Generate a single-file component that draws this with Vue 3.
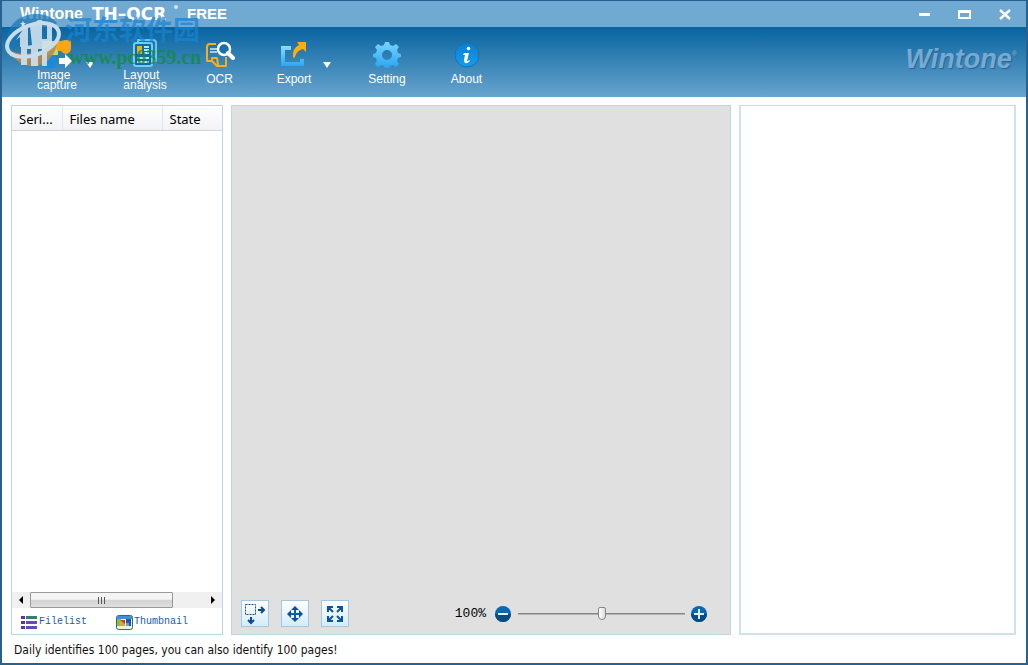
<script setup>
import { ref } from 'vue'

const zoom = ref(50)
const columns = ['Seri...', 'Files name', 'State']
</script>

<template>
  <div class="window">
    <header class="titlebar">
      <h1 class="title">
        <span class="brand">Wintone</span>
        <span class="product">TH–OCR</span>
        <span class="edition">FREE</span>
      </h1>
      <div class="controls">
        <button type="button" aria-label="Minimize">
          <svg width="16" height="14" viewBox="0 0 16 14"><path d="M2 7.5h11" stroke="#fff" stroke-width="3" /></svg>
        </button>
        <button type="button" aria-label="Maximize">
          <svg width="16" height="14" viewBox="0 0 16 14"><path d="M1 3h13v9H1zM3 6v4h9V6z" fill="#fff" fill-rule="evenodd" /></svg>
        </button>
        <button type="button" aria-label="Close">
          <svg width="16" height="14" viewBox="0 0 16 14"><path d="M3 3l10 9M13 3L3 12" stroke="#fff" stroke-width="2.4" /></svg>
        </button>
      </div>
    </header>

    <nav class="toolbar">
      <div class="split">
        <button type="button" class="tool stacked">
          <svg width="40" height="32" viewBox="0 0 40 32">
            <rect x="5" y="3" width="16" height="14" fill="#c9d573" />
            <path d="M5 17h14v9q0 4-4 4H5z" fill="#178bdc" />
            <path d="M18 7q1-5 6-4l4-1h4q2 0 2 3v5q0 5-5 6-3 0-5-3-5 1-6-6z" fill="#f9a616" />
            <path d="M22 20h6v-4l7 7-7 7v-4h-6z" fill="#fff" />
          </svg>
          <span>Image<br>capture</span>
        </button>
        <button type="button" class="drop" aria-label="Image capture options">
          <svg width="10" height="6" viewBox="0 0 10 6"><path d="M1 0h8L5 6z" fill="#fff" /></svg>
        </button>
      </div>
      <button type="button" class="tool stacked">
        <svg width="30" height="32" viewBox="0 0 30 32">
          <path d="M8 4V2h15q3 0 3 3v18h-3" fill="none" stroke="#65c6f2" stroke-width="2" />
          <rect x="4" y="5" width="18" height="23" rx="2" fill="#0d6da8" stroke="#73cef4" stroke-width="2" />
          <rect x="7" y="8" width="5" height="8" fill="#e1b329" />
          <path d="M14 8h5v2h-5zM14 11h5v2h-5zM14 14h5v2h-5zM7 19h12v2H7zM7 23h12v2H7z" fill="#b9e3f5" />
        </svg>
        <span>Layout<br>analysis</span>
      </button>
      <button type="button" class="tool narrow">
        <svg width="30" height="28" viewBox="0 0 30 28">
          <path d="M11 3H5Q2 3 2 6v14h5l5 5h9v-9M7 20v-3h5l1 7" fill="none" stroke="#f9ad19" stroke-width="2" stroke-linejoin="round" />
          <path d="M5 8h7M5 11h7" stroke="#d9e9f4" stroke-width="1.5" />
          <circle cx="19" cy="8" r="6" fill="#1c70a9" stroke="#fff" stroke-width="2.5" />
          <path d="M23 12l5 5" stroke="#fff" stroke-width="4" stroke-linecap="round" />
        </svg>
        <span>OCR</span>
      </button>
      <div class="split">
        <button type="button" class="tool">
          <svg width="28" height="28" viewBox="0 0 28 28">
            <defs><linearGradient id="exportBlue" x1="0" y1="0" x2="0" y2="1"><stop stop-color="#8bdcff" /><stop offset="1" stop-color="#27a8ef" /></linearGradient></defs>
            <path d="M11 5H1v20h23v-7h-4v3H5V9h6z" fill="url(#exportBlue)" />
            <path d="M17 1h9v10l-3-3q-6 1-8 8l-2 1q-1-10 6-13z" fill="#ffad0b" />
          </svg>
          <span>Export</span>
        </button>
        <button type="button" class="drop" aria-label="Export options">
          <svg width="10" height="6" viewBox="0 0 10 6"><path d="M1 0h8L5 6z" fill="#fff" /></svg>
        </button>
      </div>
      <button type="button" class="tool wide">
        <svg width="28" height="28" viewBox="0 0 28 28">
          <defs><linearGradient id="gearBlue" x1="0" y1="0" x2="0" y2="1"><stop stop-color="#77d3ff" /><stop offset="1" stop-color="#2aa5f2" /></linearGradient></defs>
          <path fill="url(#gearBlue)" fill-rule="evenodd" d="M12 1h4l1 3 3 1 3-2 3 3-2 3 1 3 3 1v3l-3 1-1 3 2 3-3 3-3-2-3 1-1 2h-4l-1-2-3-1-3 2-3-3 2-3-1-3-3-1v-3l3-1 1-3-2-3 3-3 3 2 3-1zM14 9a5 5 0 1 0 0 10a5 5 0 1 0 0-10" />
        </svg>
        <span>Setting</span>
      </button>
      <button type="button" class="tool narrow">
        <svg width="28" height="28" viewBox="0 0 28 28">
          <defs><linearGradient id="infoBlue" x1="0" y1="0" x2="0" y2="1"><stop stop-color="#087fd4" /><stop offset="1" stop-color="#159cee" /></linearGradient></defs>
          <circle cx="14" cy="14" r="12" fill="url(#infoBlue)" stroke="#1672ae" />
          <circle cx="15.500" cy="7.500" r="1.800" fill="#fff" />
          <path d="M11 12h5l-2 8q0 1 2-1l1 1q-3 3-5 2-1-1-1-3l1-5h-2z" fill="#fff" />
        </svg>
        <span>About</span>
      </button>
      <div class="logo">Wintone<sup>®</sup></div>
    </nav>

    <main class="workspace">
      <section class="files">
        <table>
          <thead>
            <tr><th v-for="column in columns" :key="column" scope="col">{{ column }}</th></tr>
          </thead>
        </table>
        <div class="scrollbar">
          <button type="button" aria-label="Scroll left"><svg width="4" height="8" viewBox="0 0 4 8"><path d="M4 0v8L0 4z" /></svg></button>
          <div class="rail"><div class="grip"><i></i><i></i><i></i></div></div>
          <button type="button" aria-label="Scroll right"><svg width="4" height="8" viewBox="0 0 4 8"><path d="M0 0v8l4-4z" /></svg></button>
        </div>
        <div class="tabs">
          <button type="button">
            <svg width="17" height="14" viewBox="0 0 17 14">
              <path d="M0 1h4v3H0zM0 6h4v3H0zM0 11h4v3H0z" fill="#5338ad" />
              <path d="M5 1h11v3H5z" fill="#317f70" /><path d="M5 6h11v3H5zM5 11h11v3H5z" fill="#6549bd" />
            </svg>
            <span>Filelist</span>
          </button>
          <button type="button">
            <svg width="17" height="15" viewBox="0 0 17 15">
              <rect x=".5" y=".5" width="16" height="14" rx="2" fill="#e8f4db" stroke="#456b38" />
              <path d="M1 1h15v3H1z" fill="#3d91d9" /><path d="M1 4h4v7H1z" fill="#79c843" />
              <path d="M4 5h5v6H4z" fill="#c83b31" /><path d="M4 5l5 4v2H4z" fill="#e8a326" />
              <path d="M10 4h5v7h-5z" fill="#2453ad" /><path d="M10 8h3v3h-3z" fill="#54a9d8" />
            </svg>
            <span>Thumbnail</span>
          </button>
        </div>
      </section>

      <section class="preview">
        <div class="viewbar">
          <button type="button" class="view" aria-label="Actual size">
            <svg width="22" height="22" viewBox="0 0 22 22">
              <rect x="1.500" y="1.500" width="10" height="10" fill="none" stroke="#234a78" stroke-dasharray="2 1" />
              <path d="M14 7h6M17 4l3 3-3 3M7 14v6M4 17l3 3 3-3" fill="none" stroke="#0e4c91" stroke-width="2" />
            </svg>
          </button>
          <button type="button" class="view" aria-label="Move">
            <svg width="22" height="22" viewBox="0 0 22 22">
              <path d="M11 4v14M4 11h14" stroke="#0c5eb5" stroke-width="2" />
              <path d="M11 3l4 4H7zM11 19l4-4H7zM3 11l4-4v8zM19 11l-4-4v8z" fill="#0b4fa0" />
            </svg>
          </button>
          <button type="button" class="view" aria-label="Fit to window">
            <svg width="22" height="22" viewBox="0 0 22 22">
              <path d="M4 9V4h5M4 4l5 5M13 4h5v5M18 4l-5 5M4 13v5h5M4 18l5-5M18 13v5h-5M18 18l-5-5" fill="none" stroke="#0b54a5" stroke-width="2" />
            </svg>
          </button>
          <div class="zoom">
            <label for="zoom">100%</label>
            <button type="button" aria-label="Zoom out">
              <svg width="18" height="18" viewBox="0 0 18 18"><circle cx="9" cy="9" r="8" fill="#0768b4" /><path d="M1 9a8 8 0 0 0 16 0z" fill="#074b83" /><path d="M4 9h10" stroke="#dfefff" stroke-width="2" /></svg>
            </button>
            <input id="zoom" v-model="zoom" type="range" min="0" max="100">
            <button type="button" aria-label="Zoom in">
              <svg width="18" height="18" viewBox="0 0 18 18"><circle cx="9" cy="9" r="8" fill="#0768b4" /><path d="M1 9a8 8 0 0 0 16 0z" fill="#074b83" /><path d="M4 9h10M9 4v10" stroke="#dfefff" stroke-width="2" /></svg>
            </button>
          </div>
        </div>
      </section>

      <section class="result"></section>
    </main>

    <footer class="status">Daily identifies 100 pages, you can also identify 100 pages!</footer>

    <div class="watermark">
      <svg width="68" height="56" viewBox="0 0 68 56">
        <path d="M2 22C6 8 18 0 34 1Q46 2 52 10L40 26 4 34z" fill="#1976b4" opacity=".7" />
        <path d="M5 38Q28 46 52 30Q50 44 38 51Q26 56 16 50Q8 46 5 38z" fill="#b58a52" opacity=".9" />
        <path d="M11 27l8-12h4v19h-8V24zM25 14l8-7h4v19h5V9l5 2v22l-5 4v16h-5V36h-4v17h-7V36h-4v16h-6V34l11-2z" fill="#cfe1ed" opacity=".9" />
        <ellipse cx="28" cy="27" rx="27" ry="15" transform="rotate(-20 28 27)" fill="none" stroke="#c8dcea" stroke-width="4" />
        <path d="M18 8l1 2h2l-2 2 1 2-2-1-2 1 1-2-2-2h2z" fill="#cce1f0" />
      </svg>
      <div class="marktext"><strong>河东软件园</strong><span>www.pc0359.cn</span></div>
    </div>
  </div>
</template>

<style>
body { margin: 0; }
</style>

<style scoped>
.window {
  position: relative;
  box-sizing: border-box;
  min-height: 100vh;
  display: flex;
  flex-direction: column;
  border: 2px solid #28608f;
  border-top-width: 1px;
  background: #fff;
  font-family: "Liberation Sans", Arial, sans-serif;
}
button { padding: 0; border: 0; background: none; font: inherit; color: inherit; }
svg { display: block; flex: none; }
.titlebar {
  display: flex;
  align-items: center;
  justify-content: space-between;
  height: 26px;
  padding: 0 13px 0 18px;
  background: #70a9d1;
  color: #fff;
}
.title { display: flex; align-items: center; margin: 0; font-size: 15px; line-height: 28px; }
.brand { width: 72px; font-size: 16px; }
.product { position: relative; width: 95px; font-family: "DejaVu Sans", sans-serif; font-size: 17px; white-space: nowrap; }
.product::after {
  content: "";
  position: absolute;
  left: 82px;
  top: 5px;
  width: 4px;
  height: 4px;
  border-radius: 50%;
  background: #c9e8fb;
}
.controls { display: flex; gap: 24px; }
.toolbar {
  display: flex;
  align-items: flex-start;
  gap: 20px;
  height: 70px;
  padding: 0 9px 0 27px;
  box-sizing: border-box;
  background: linear-gradient(#07649f, #68a4ce);
  color: #fff;
}
.split { display: flex; align-items: flex-start; }
.tool {
  display: flex;
  flex-direction: column;
  align-items: center;
  gap: 4px;
  width: 56px;
  padding-top: 14px;
  font-size: 12px;
  line-height: 12px;
}
.stacked { gap: 0; padding-top: 11px; line-height: 10px; text-align: left; }
.narrow { width: 53px; }
.wide { width: 66px; }
.drop { width: 12px; padding-top: 35px; }
.logo {
  margin-left: auto;
  padding-top: 16px;
  font-size: 27px;
  font-style: italic;
  font-weight: bold;
  line-height: 32px;
  color: #75abd3;
  text-shadow: 1px 1px 1px #2d6591;
}
.logo sup { font-size: 7px; line-height: 0; vertical-align: 12px; }
.workspace {
  flex: 1;
  display: grid;
  grid-template-columns: 212px minmax(0, 1fr) 277px;
  gap: 8px;
  padding: 8px 10px 0 9px;
}
.files, .preview, .result { box-sizing: border-box; border: 1px solid #bbd8e8; }
.result { border-width: 1px 2px 2px; border-color: #c5dce8 #d0e1eb #d0e1eb; }
.files { display: flex; flex-direction: column; }
.files table { width: 100%; border-collapse: collapse; table-layout: fixed; margin-bottom: auto; }
.files th {
  box-sizing: border-box;
  height: 24px;
  padding: 2px 0 0 7px;
  border-right: 1px solid #e0e5ed;
  border-bottom: 1px solid #d5d5d5;
  background: linear-gradient(#fff, #f2f3f6);
  font: 13px/18px "Noto Sans", sans-serif;
  text-align: left;
}
.files th:first-child { width: 50px; }
.files th:nth-child(2) { width: 100px; }
.files th:last-child { border-right: 0; }
.scrollbar { display: flex; height: 16px; background: #f0f0f0; }
.scrollbar button { display: grid; place-items: center; width: 18px; }
.rail { flex: 1; display: flex; }
.grip {
  display: flex;
  align-items: center;
  justify-content: center;
  gap: 2px;
  box-sizing: border-box;
  width: 82%;
  border: 1px solid #999;
  border-radius: 1px;
  background: linear-gradient(#f4f4f4 45%, #d4d4d6 50%, #dedede);
}
.grip i { width: 1px; height: 7px; background: #555; }
.tabs { display: flex; gap: 29px; height: 26px; padding: 2px 0 0 9px; box-sizing: border-box; color: #1460a8; }
.tabs button { display: flex; align-items: center; gap: 1px; font: 10px/14px "Liberation Mono", monospace; }
.preview { display: flex; flex-direction: column; justify-content: flex-end; background: #e0e0e0; }
.viewbar { display: flex; align-items: center; gap: 12px; padding: 0 22px 7px 9px; }
.view {
  display: grid;
  place-items: center;
  box-sizing: border-box;
  width: 28px;
  height: 27px;
  border: 1px solid #a5c8df;
  background: linear-gradient(#fff, #d3ecfb);
}
.zoom { display: flex; align-items: center; margin-left: auto; }
.zoom label { margin-right: 8px; font: 13px/18px "Liberation Mono", monospace; }
.zoom input { width: 167px; height: 18px; margin: 0 5px 0 6px; appearance: none; background: none; }
.zoom input::-webkit-slider-runnable-track { height: 2px; background: linear-gradient(#858585 50%, #b5b5b5 50%); }
.zoom input::-webkit-slider-thumb {
  appearance: none;
  box-sizing: border-box;
  width: 8px;
  height: 13px;
  margin-top: -6px;
  border: 1px solid #858585;
  border-radius: 2px 2px 4px 4px;
  background: linear-gradient(90deg, #fff, #ddd);
}
.status { padding: 6px 12px 3px; font: 12px/19px "DejaVu Sans Condensed", "Noto Sans", sans-serif; color: #111; }
.watermark { position: absolute; left: 3px; top: 12px; display: flex; pointer-events: none; }
.marktext { display: flex; flex-direction: column; margin-left: -8px; }
.marktext strong { font: bold 27px/32px "Noto Sans CJK SC", sans-serif; color: #1a84d2; opacity: 0.7; }
.marktext span { padding-left: 4px; font: bold 20px/24px "Liberation Serif", serif; color: #128a3b; opacity: 0.75; }
</style>
